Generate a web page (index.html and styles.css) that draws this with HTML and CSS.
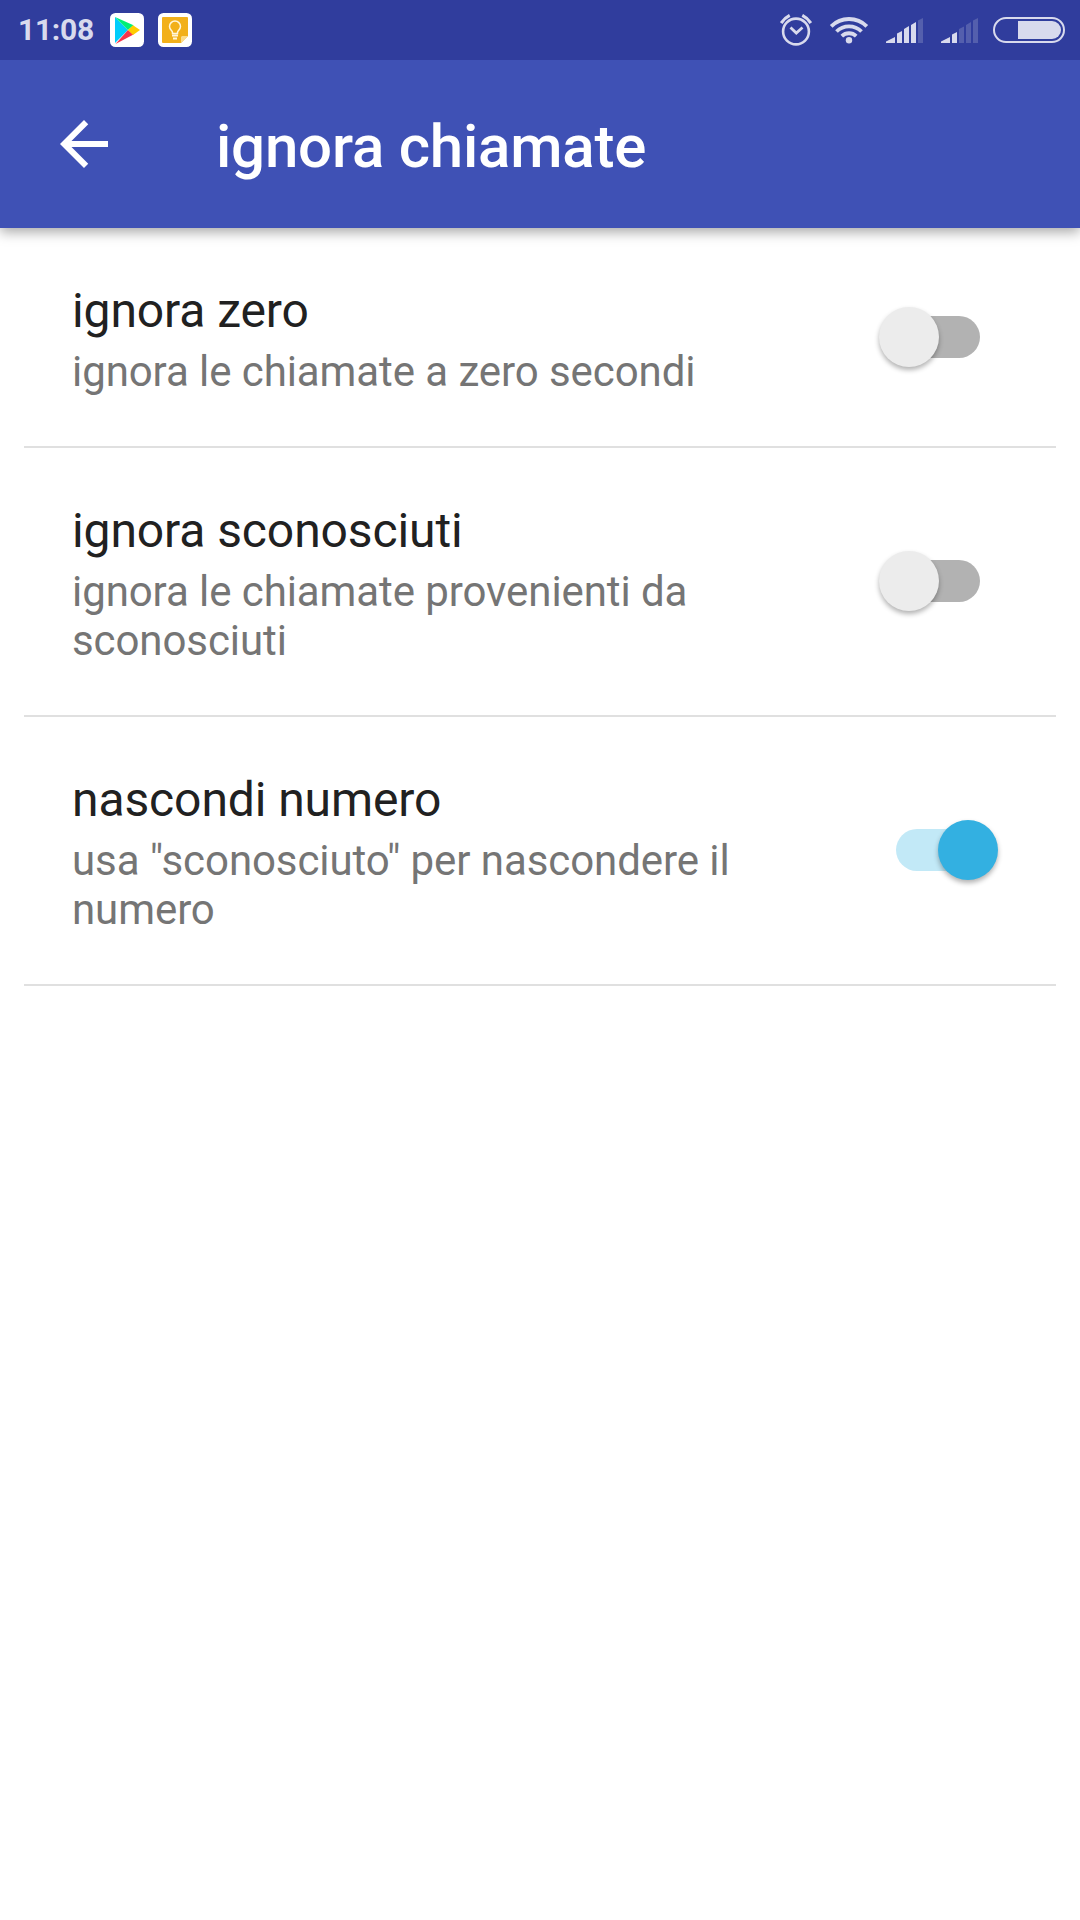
FILE: index.html
```html
<!DOCTYPE html>
<html lang="it">
<head>
  <meta charset="UTF-8">
  <title>ignora chiamate</title>
  <link rel="stylesheet" href="styles.css">
</head>
<body>
  <div class="status-bar">
    <span class="clock">11:08</span>
    <svg class="app-icon" width="34" height="34" viewBox="0 0 34 34">
      <rect width="34" height="34" rx="5.500" fill="#fff"/>
      <path d="M5 4v26l13-13z" fill="#00cdfb"/>
      <path d="M5 4l18.500 8.300L18 17z" fill="#00f076"/>
      <path d="M5.500 31l18-9.500L18 17z" fill="#f8354b"/>
      <path d="M23 12.300l7 4.700-7 5-5-5z" fill="#ffcb00"/>
    </svg>
    <svg class="app-icon" width="34" height="34" viewBox="0 0 34 34">
      <rect width="34" height="34" rx="5.500" fill="#fff"/>
      <path d="M5 4h24a1 1 0 0 1 1 1v18l-7 7H5a1 1 0 0 1-1-1V5a1 1 0 0 1 1-1z" fill="#f2b01a"/>
      <path d="M23 30v-6l1-1h6z" fill="#fbdc8b"/>
      <path d="M14.500 19.500c0-2-3-2.800-3-6a5.500 5.500 0 0 1 11 0c0 3.200-3 4-3 6v1h-5z" fill="none" stroke="#fff6dc" stroke-width="1.500"/>
      <path d="M14 22.500h6M15 25.500h4" stroke="#fff6dc" stroke-width="2"/>
    </svg>
    <div class="status-right">
      <!-- alarm -->
      <svg width="32" height="32" viewBox="0 0 32 32" fill="none" stroke="#d8daed">
        <circle cx="16" cy="17.500" r="12.900" stroke-width="2.600"/>
        <path d="M1.200 9Q4.500 4 9.700 1.400M30.800 9Q27.500 4 22.300 1.400" stroke-width="3.200"/>
        <path d="M10.500 13.500l5.800 5.500 6.200-5.500" stroke-width="2.800"/>
      </svg>
      <!-- wifi -->
      <svg width="40" height="32" viewBox="0 0 40 32" fill="none" stroke="#d8daed" stroke-width="3.800">
        <path d="M2.200 12.300a25.300 25.300 0 0 1 35.600 0"/>
        <path d="M7.500 17.500a17.700 17.700 0 0 1 25 0"/>
        <path d="M12.800 22.100a10.500 10.500 0 0 1 14.400 0"/>
        <circle cx="20" cy="26.200" r="3.200" fill="#d8daed" stroke="none"/>
      </svg>
      <!-- sim 1 -->
      <svg class="signal" width="37" height="26" viewBox="0 0 37 26" fill="#d8daed">
        <path d="M0 26v-1.500L9 20v6zM11 26V16.500l5-2.500v12zM18 26V12l5-3v17zM25 26V8l5-3v21z"/>
        <path d="M32 26V3.500L37 1v25z" fill="#545fad"/>
      </svg>
      <!-- sim 2 -->
      <svg class="signal" width="37" height="26" viewBox="0 0 37 26" fill="#d8daed">
        <path d="M0 26v-1.500L9 20v6zM11 26V17.500l5-2.500v11z"/>
        <path d="M18 26V12l5-2.500V26zM25 26V8l5-3v21zM32 26V3.500L37 1v25z" fill="#545fad"/>
      </svg>
      <!-- battery -->
      <svg class="battery" width="72" height="26" viewBox="0 0 72 26">
        <rect x="1" y="1" width="70" height="24" rx="12" fill="none" stroke="#d8daed" stroke-width="2"/>
        <path d="M25 4h34a9 9 0 0 1 0 18H25z" fill="#d8daed"/>
      </svg>
    </div>
  </div>

  <div class="toolbar">
    <svg class="back" width="48" height="48" viewBox="0 0 16 16" fill="#fff">
      <path d="M16 7H3.830l5.590-5.590L8 0 0 8l8 8 1.410-1.410L3.830 9H16z"/>
    </svg>
    <h1>ignora chiamate</h1>
  </div>

  <div class="list">
    <div class="row">
      <div class="text">
        <div class="title">ignora zero</div>
        <div class="summary">ignora le chiamate a zero secondi</div>
      </div>
      <div class="switch"><span class="thumb"></span></div>
    </div>
    <div class="row">
      <div class="text">
        <div class="title">ignora sconosciuti</div>
        <div class="summary">ignora le chiamate provenienti da sconosciuti</div>
      </div>
      <div class="switch"><span class="thumb"></span></div>
    </div>
    <div class="row">
      <div class="text">
        <div class="title">nascondi numero</div>
        <div class="summary">usa "sconosciuto" per nascondere il numero</div>
      </div>
      <div class="switch on"><span class="thumb"></span></div>
    </div>
  </div>
</body>
</html>
```
FILE: styles.css
```css
body {
  margin: 0;
  min-height: 1920px;
  font-family: Roboto, sans-serif;
  background-color: #fff;
  color: #212121;
}
svg {
  display: block;
  flex: none;
}
.status-bar {
  position: relative;
  z-index: 1;
  display: flex;
  align-items: center;
  height: 60px;
  padding: 0 15px 0 18px;
  box-sizing: border-box;
  background-color: #303d9d;
  color: #d8daed;
}
.clock {
  width: 92px;
  font-size: 30px;
  font-weight: 700;
  letter-spacing: -0.3px;
  line-height: 62px;
}
.app-icon {
  margin-right: 14px;
}
.status-right {
  display: flex;
  align-items: center;
  margin-left: auto;
}
.status-right svg {
  margin-left: 17px;
}
.status-right .signal {
  margin-left: 18px;
}
.status-right svg + .signal {
  margin-left: 17px;
}
.status-right .signal + .signal {
  margin-left: 18px;
}
.status-right .battery {
  margin-left: 15px;
}
.toolbar {
  display: flex;
  align-items: center;
  height: 168px;
  background-color: #3f51b5;
  box-shadow: 0 4px 12px rgba(0,0,0,0.35);
}
.back {
  margin-left: 60px;
}
h1 {
  margin: 5px 0 0 108px;
  font-size: 60px;
  font-weight: 500;
  letter-spacing: -0.2px;
  line-height: 70px;
  color: #fff;
}
.list {
  padding: 0 24px;
}
.row {
  display: flex;
  align-items: center;
  padding: 55px 76px 50px 48px;
  border-bottom: 2px solid #e0e0e0;
}
.text {
  flex: 1;
  margin-right: 60px;
}
.title {
  font-size: 48px;
  letter-spacing: -0.1px;
  line-height: 56px;
}
.summary {
  margin-top: 8px;
  font-size: 42px;
  letter-spacing: -0.08px;
  line-height: 49px;
  color: #757575;
}
.switch {
  display: flex;
  align-items: center;
  width: 84px;
  height: 42px;
  margin-bottom: 6px;
  border-radius: 21px;
  background-color: #b2b2b2;
}
.thumb {
  flex: none;
  width: 60px;
  height: 60px;
  margin-left: -17.5px;
  border-radius: 50%;
  background-color: #ececec;
  box-shadow: 0 3px 5px rgba(0,0,0,0.3);
}
.switch.on {
  background-color: #c2e9f7;
}
.on .thumb {
  margin-left: 41.5px;
  background-color: #33b0e1;
}
```
